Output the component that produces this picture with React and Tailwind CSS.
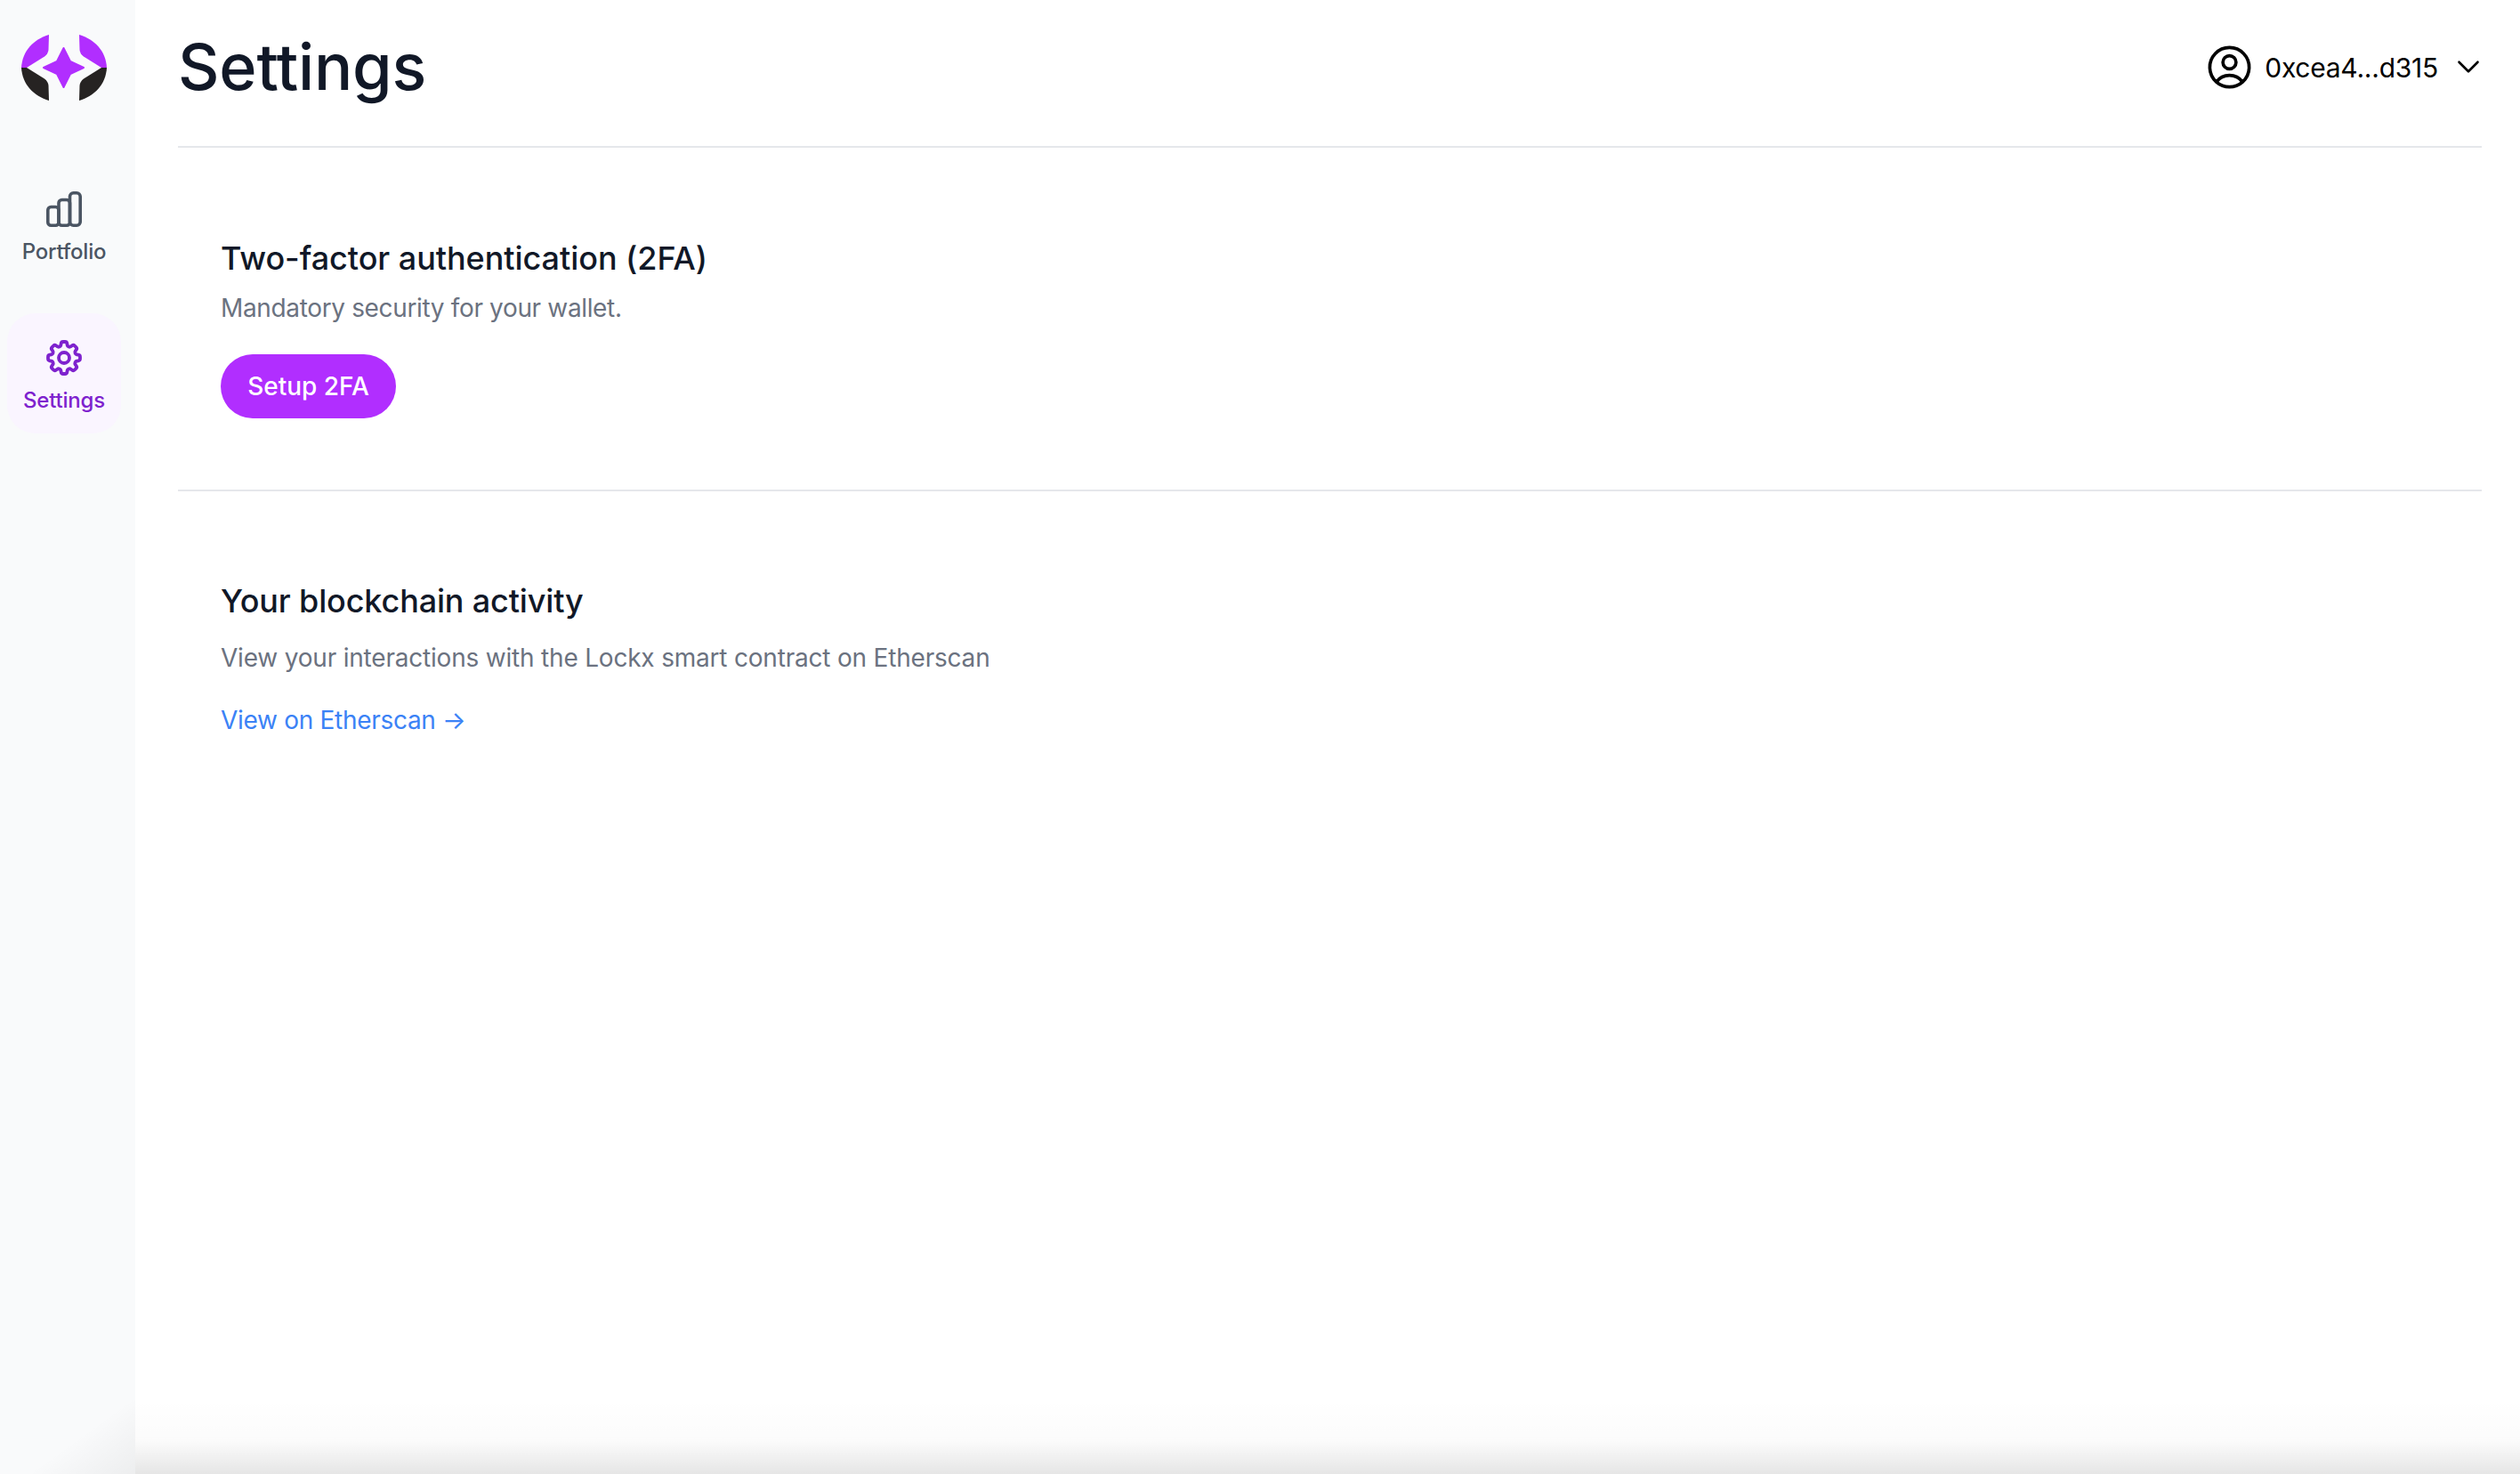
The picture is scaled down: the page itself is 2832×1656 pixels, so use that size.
import { ChevronDown } from 'lucide-react'
import { HiOutlineCog8Tooth, HiOutlineUserCircle } from 'react-icons/hi2'

function Logo() {
  return (
    <svg width="96" height="74" viewBox="0 0 96 74" className="ml-[16px]">
      <path d="M31 0C14 5 1 18 0 37H6L26 24.5Q30 21.5 30.5 17Z" fill="#b12eff" />
      <path d="M65 0C82 5 95 18 96 37H90L70 24.5Q66 21.5 65.5 17Z" fill="#b12eff" />
      <path d="M0 37C1 56 14 69 31 74L30.5 57Q30 52.5 26 49.5L6 37Z" fill="#262322" />
      <path d="M96 37C95 56 82 69 65 74L65.5 57Q66 52.5 70 49.5L90 37Z" fill="#262322" />
      <path
        d="M47.5 15L55 30L70 37L55 44L47.5 59L40 44L25 37L40 30Z"
        fill="#b12eff"
        stroke="#b12eff"
        strokeWidth="2"
        strokeLinejoin="round"
      />
    </svg>
  )
}

// three bars sharing their walls, drawn because the icon sets keep them apart
function BarsIcon({ className }) {
  return (
    <svg viewBox="0 0 40 40" fill="none" stroke="currentColor" strokeWidth="3.6" className={className}>
      <rect x="1.8" y="17.5" width="12.2" height="20.7" rx="3.5" />
      <rect x="14" y="9.5" width="12.5" height="28.7" rx="3.5" />
      <rect x="26.5" y="1.8" width="11.7" height="36.4" rx="4" />
    </svg>
  )
}

function NavItem({ icon, label, active }) {
  return (
    <div
      className={`flex flex-col items-center w-[128px] h-[135px] pt-[26px] rounded-[32px] ${
        active ? 'bg-[#faf5ff] text-[#7e22ce]' : 'text-[#4b5563]'
      }`}
    >
      <div className="flex items-center justify-center w-[48px] h-[48px] shrink-0">{icon}</div>
      <span className="text-[24px] leading-[32px] mt-[8px] font-medium tracking-[-0.2px]">{label}</span>
    </div>
  )
}

export default function App() {
  return (
    <div className="flex h-screen overflow-hidden bg-white font-['Inter',sans-serif] text-[#111827]">
      {/* Sidebar */}
      <aside className="relative flex flex-col w-[152px] shrink-0 bg-[#f9fafb] pt-[39px] pl-[8px]">
        <Logo />
        <nav className="flex flex-col gap-[32px] mt-[72px]">
          <NavItem icon={<BarsIcon className="w-[40px] h-[40px]" />} label="Portfolio" />
          <NavItem icon={<HiOutlineCog8Tooth className="w-[48px] h-[48px] [&_path]:stroke-[1.9]" />} label="Settings" active />
        </nav>
        <div className="absolute inset-x-0 bottom-0 h-[110px] bg-gradient-to-br from-transparent from-60% to-black/5 pointer-events-none" />
      </aside>

      {/* Main column */}
      <main className="relative flex-1 min-w-0 pl-[48px] pr-[43px]">
        <header className="flex items-center justify-between h-[166px] pb-[14px] border-b-2 border-[#e5e7eb]">
          <h1 className="text-[72px] leading-[80px] font-medium tracking-[-0.2px]">Settings</h1>
          <div className="flex items-center text-black -mr-[6px]">
            <HiOutlineUserCircle className="w-[59px] h-[59px]" />
            <span className="ml-[10px] pt-[2px] text-[30px] leading-[40px] tracking-[-0.25px]">0xcea4...d315</span>
            <ChevronDown className="ml-[13px] w-[42px] h-[42px]" strokeWidth={1.5} />
          </div>
        </header>

        <section className="h-[386px] pl-[48px] pt-[102px] border-b-2 border-[#e5e7eb]">
          <h2 className="text-[36px] leading-[44px] font-medium tracking-[-0.05px]">Two-factor authentication (2FA)</h2>
          <p className="mt-[12px] text-[28px] leading-[44px] tracking-[-0.35px] text-[#6b7280]">Mandatory security for your wallet.</p>
          <button className="flex items-center justify-center mt-[30px] w-[197px] h-[72px] rounded-full bg-[#b12eff] text-white text-[28px] font-medium">
            Setup 2FA
          </button>
        </section>

        <section className="pl-[48px] pt-[101px]">
          <h2 className="text-[36px] leading-[44px] font-medium tracking-[-0.15px]">Your blockchain activity</h2>
          <p className="mt-[20px] text-[28px] leading-[44px] tracking-[-0.2px] text-[#6b7280]">
            View your interactions with the Lockx smart contract on Etherscan
          </p>
          <a className="block mt-[26px] text-[28px] leading-[44px] tracking-[-0.3px] text-[#3b82f6]">View on Etherscan →</a>
        </section>

        {/* Bottom fade */}
        <div className="absolute inset-x-0 bottom-0 h-[84px] bg-gradient-to-b from-transparent via-black/[0.015] via-55% to-black/10 pointer-events-none" />
      </main>
    </div>
  )
}
